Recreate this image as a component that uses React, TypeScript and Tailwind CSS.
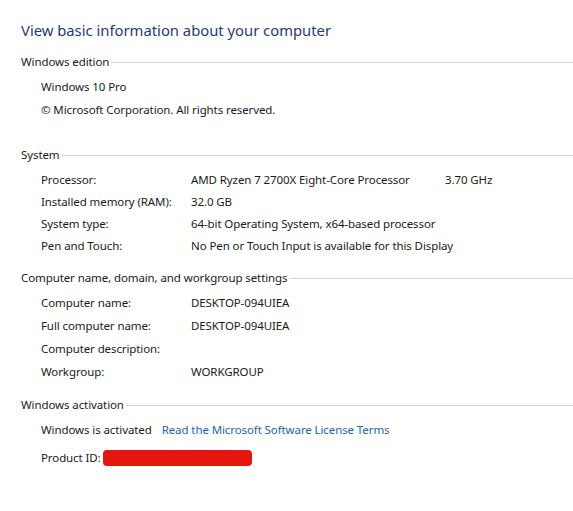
import type { ReactNode } from "react";

const font = { fontFamily: '"Noto Sans", "Open Sans", Arial, sans-serif' };

function Heading({ children }: { children: ReactNode }) {
  return (
    <div className="flex h-[16px] items-center text-[11.5px] tracking-[-0.1px] text-[#1a1a1a]">
      <span className="whitespace-nowrap leading-[16px]">{children}</span>
      <div className="ml-[2px] h-px flex-1 bg-[#d4d4d4]" />
    </div>
  );
}

function Row({ label, value, extra, h }: { label: string; value?: string; extra?: string; h: string }) {
  return (
    <div className={`flex items-center pl-[20px] text-[11.5px] tracking-[-0.1px] text-[#1a1a1a] ${h}`}>
      <span className="w-[150px] shrink-0 whitespace-nowrap">{label}</span>
      {value && <span className="w-[254px] shrink-0 whitespace-nowrap">{value}</span>}
      {extra && <span className="whitespace-nowrap">{extra}</span>}
    </div>
  );
}

export default function App() {
  return (
    <div className="min-h-[511px] w-[573px] overflow-hidden bg-white pl-[21px] pt-[19px]" style={font}>
      <div className="h-[22px] whitespace-nowrap text-[14.8px] leading-[22px] text-[#1f3a7a]">
        View basic information about your computer
      </div>

      <div className="mt-[13px]">
        <Heading>Windows edition</Heading>
        <div className="pt-[5px]">
          <div className="flex h-[23px] items-center pl-[20px] text-[11.5px] tracking-[-0.1px] text-[#1a1a1a]">Windows 10 Pro</div>
          <div className="flex h-[23px] items-center pl-[20px] text-[11.5px] tracking-[-0.1px] text-[#1a1a1a]">
            © Microsoft Corporation. All rights reserved.
          </div>
        </div>
      </div>

      <div className="mt-[26px]">
        <Heading>System</Heading>
        <div className="pt-[6px]">
          <Row h="h-[22px]" label="Processor:" value="AMD Ryzen 7 2700X Eight-Core Processor" extra="3.70 GHz" />
          <Row h="h-[22px]" label="Installed memory (RAM):" value="32.0 GB" />
          <Row h="h-[22px]" label="System type:" value="64-bit Operating System, x64-based processor" />
          <Row h="h-[22px]" label="Pen and Touch:" value="No Pen or Touch Input is available for this Display" />
        </div>
      </div>

      <div className="mt-[13px]">
        <Heading>Computer name, domain, and workgroup settings</Heading>
        <div className="pt-[5px]">
          <Row h="h-[23px]" label="Computer name:" value="DESKTOP-094UIEA" />
          <Row h="h-[23px]" label="Full computer name:" value="DESKTOP-094UIEA" />
          <Row h="h-[23px]" label="Computer description:" />
          <Row h="h-[23px]" label="Workgroup:" value="WORKGROUP" />
        </div>
      </div>

      <div className="mt-[14px]">
        <Heading>Windows activation</Heading>
        <div className="pt-[5px]">
          <div className="flex h-[23px] items-center pl-[20px] text-[11.5px] tracking-[-0.1px] text-[#1a1a1a]">
            <span className="whitespace-nowrap">Windows is activated</span>
            <span className="ml-[10px] whitespace-nowrap text-[#2266b0]">Read the Microsoft Software License Terms</span>
          </div>
          <div className="mt-[5px] flex h-[23px] items-center pl-[20px] text-[11.5px] tracking-[-0.1px] text-[#1a1a1a]">
            <span className="whitespace-nowrap">Product ID:</span>
            <div className="ml-[2px] h-[16px] w-[149px] rounded-[4px] bg-[#e3170f]" />
          </div>
        </div>
      </div>
    </div>
  );
}
